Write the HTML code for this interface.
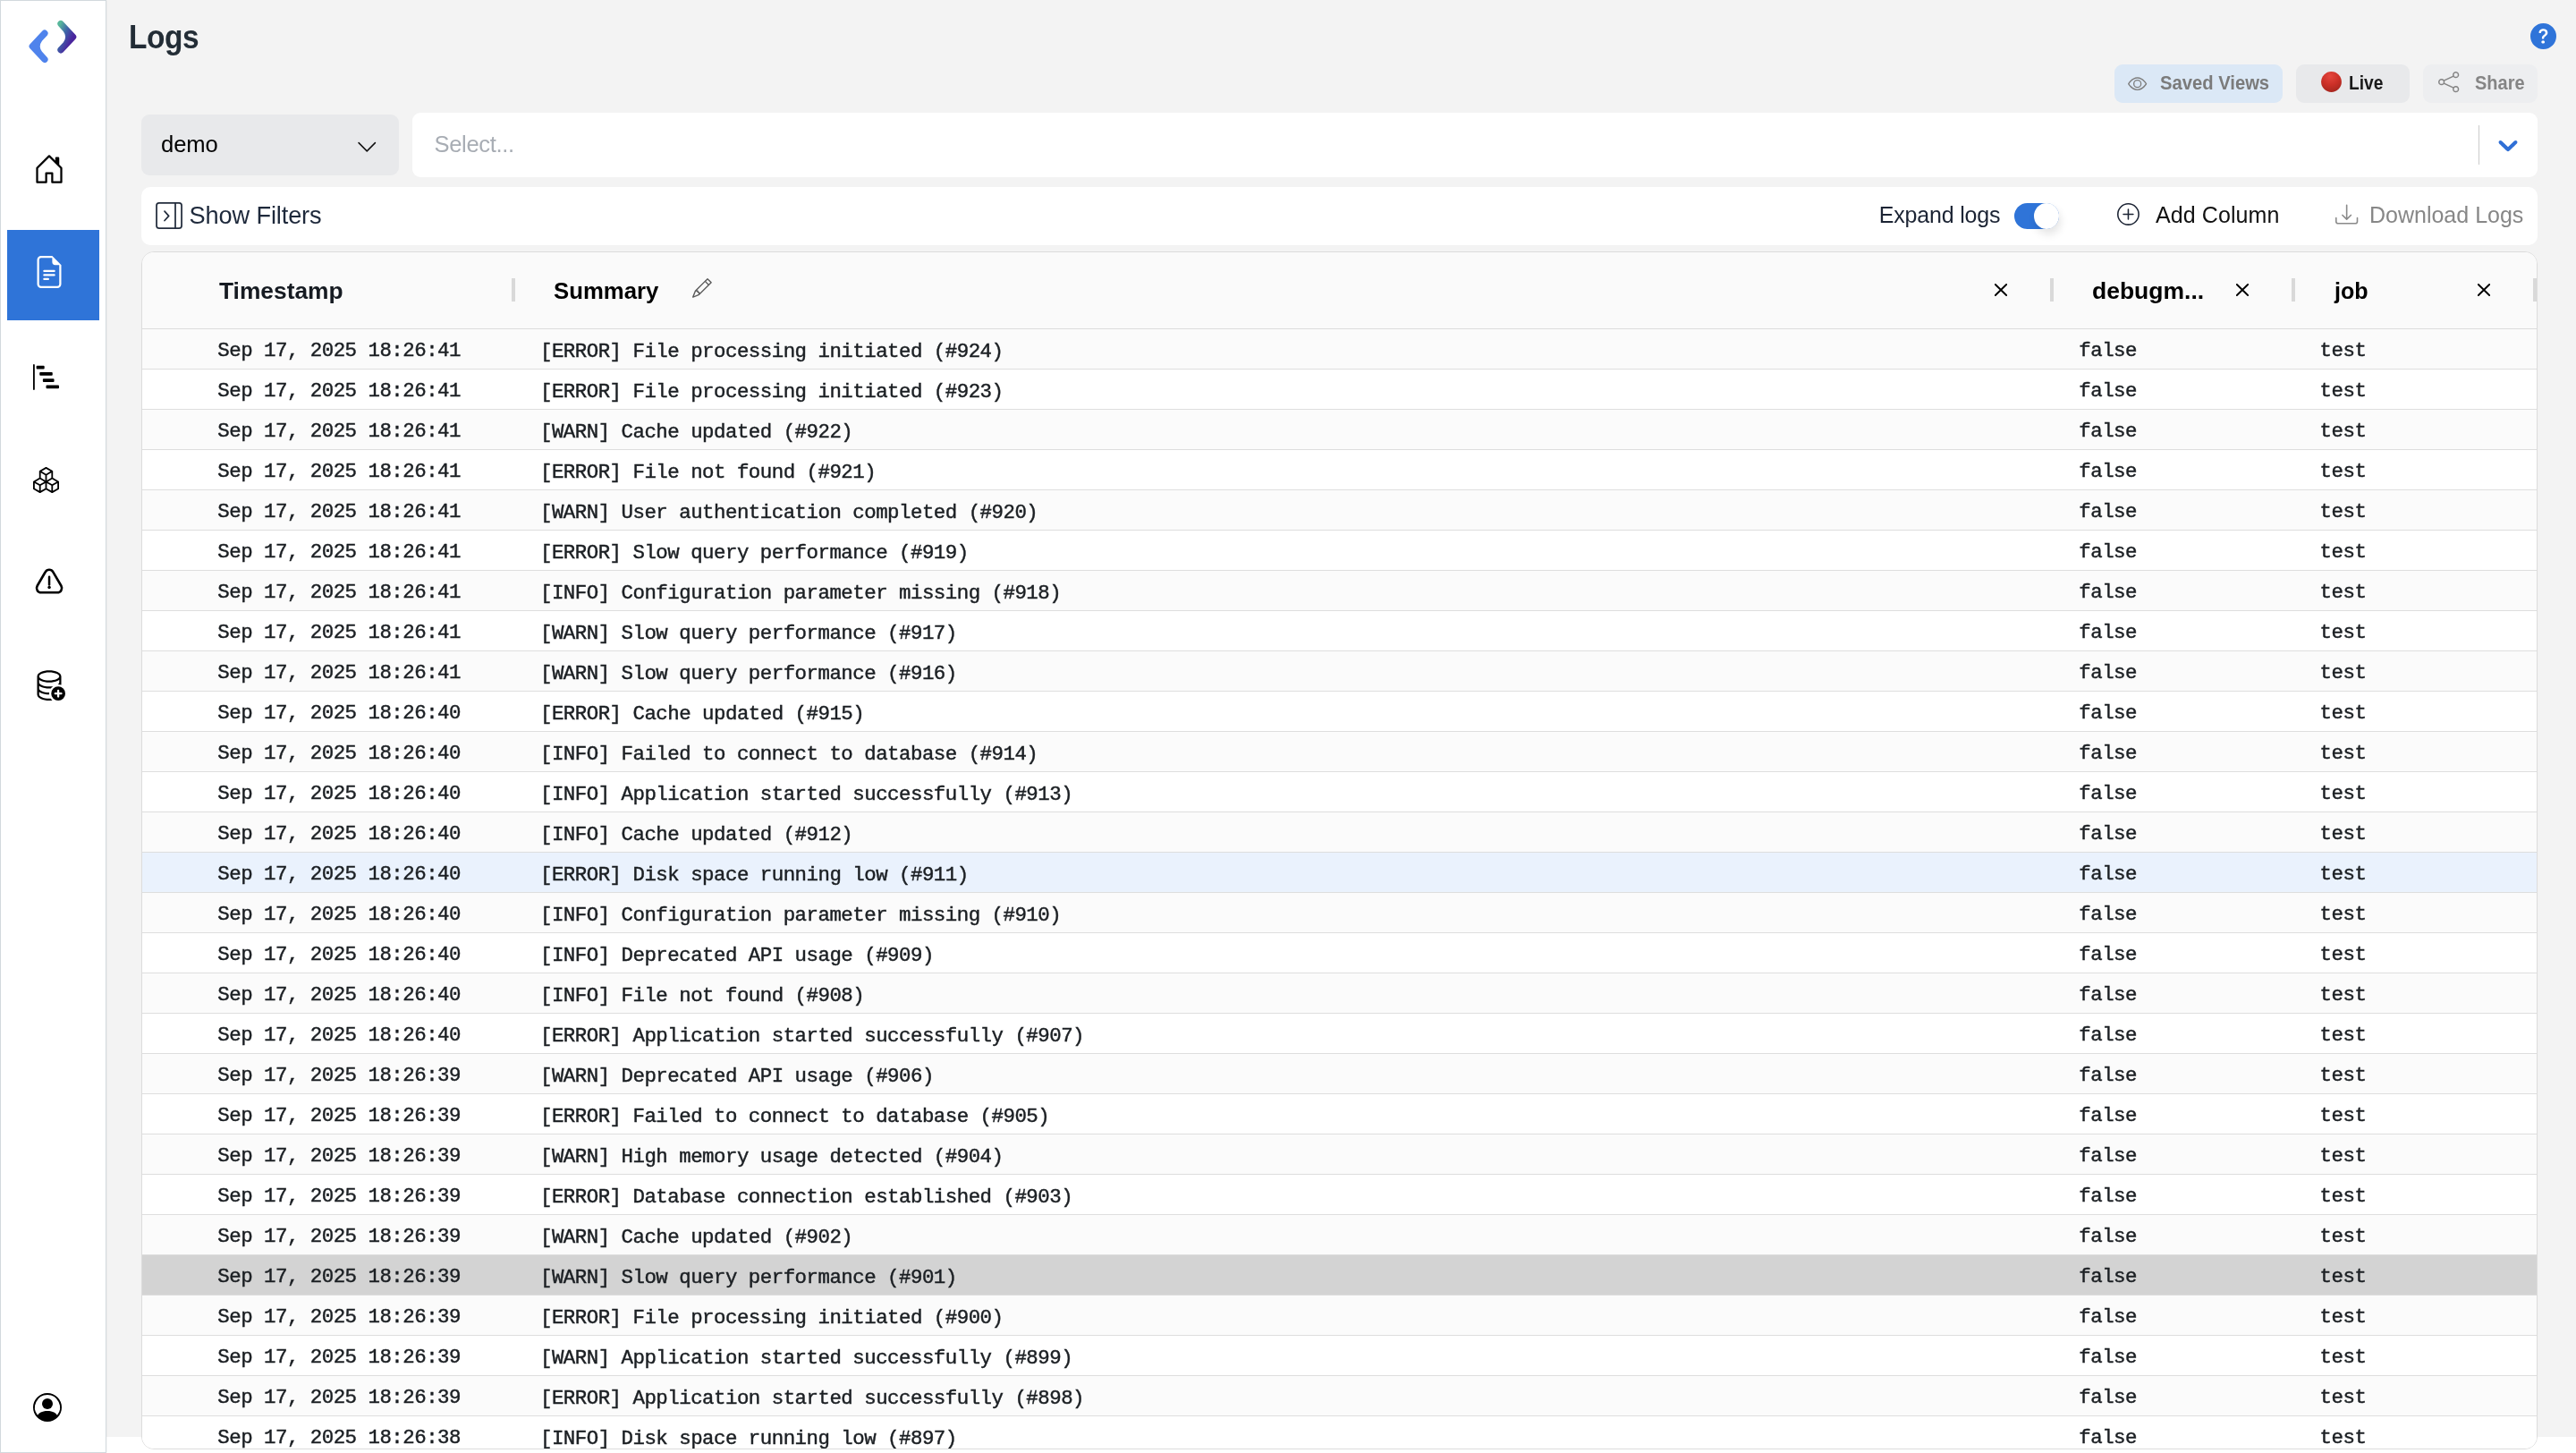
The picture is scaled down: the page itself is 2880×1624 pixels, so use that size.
<!DOCTYPE html>
<html lang="en">
<head>
<meta charset="utf-8">
<title>Logs</title>
<style>
*{box-sizing:border-box;margin:0;padding:0}
html,body{width:2880px;height:1624px;overflow:hidden;background:#fff}
body{will-change:transform;font-family:"Liberation Sans",sans-serif;color:#000;position:relative}
.abs{position:absolute}
svg{position:absolute;display:block;overflow:visible}
#main{position:absolute;left:119px;top:0;width:2761px;height:1606px;background:#f3f3f3}
#side{position:absolute;left:0;top:0;width:119px;height:1624px;background:#fff;border:1px solid #d2d9dd;box-shadow:1px 0 2px rgba(0,0,0,.03)}
#active{position:absolute;left:8px;top:257px;width:103px;height:101px;background:#2f74d8}
.t{position:absolute;white-space:nowrap;line-height:1}
#title{left:144px;top:24px;font-size:36px;font-weight:bold;color:#232d36;letter-spacing:-.5px;transform:scaleX(.93);transform-origin:0 0}
.btn{position:absolute;top:72px;height:43px;border-radius:9px}
.bt{font-weight:bold;font-size:21.5px;transform-origin:0 0}
#demo{position:absolute;left:158px;top:128px;width:288px;height:68px;border-radius:9px;background:#e8e9eb}
#sel{position:absolute;left:461px;top:126px;width:2376px;height:72px;border-radius:9px;background:#fff}
#fbar{position:absolute;left:158px;top:209px;width:2679px;height:65px;border-radius:10px;background:#fff}
#tbl{position:absolute;left:158px;top:281px;width:2679px;height:1339px;border:1px solid #dcdcdc;border-radius:14px;background:#fff;overflow:hidden}
#thead{position:absolute;left:0;top:0;width:100%;height:86px;background:#fafafa;border-bottom:1px solid #dcdcdc}
#thead .t{font-weight:bold;font-size:25.2px;top:30.5px;transform-origin:0 0}
.sep{position:absolute;top:29px;width:4px;height:26px;background:#d9d9d9}
#rows{position:absolute;left:0;top:86px;width:100%}
.r{position:relative;height:45px;border-bottom:1px solid #dedede;background:#fff;font-family:"Liberation Mono",monospace;font-size:22.4px;letter-spacing:-.5px;color:#1b1f23;-webkit-text-stroke:.45px #1b1f23}
.r.o{background:#fbfbfb}
.r.hl{background:#eaf2fd}
.r.sel{background:#d3d3d3}
.r span{position:absolute;top:13px;line-height:22px;white-space:pre}
.c1{left:84.3px}
.c2{left:445px;top:14px!important}
.c3{left:2165.3px}
.c4{left:2434.6px}
</style>
</head>
<body>
<div id="main"></div>

<!-- sidebar -->
<div id="side"></div>
<div id="active"></div>
<!--SIDEICONS-START-->
<!-- logo -->
<svg style="left:0;top:0" width="119" height="100" viewBox="0 0 119 100">
<defs><linearGradient id="lg" gradientUnits="userSpaceOnUse" x1="66" y1="26" x2="86" y2="36"><stop offset="0.05" stop-color="#57b79b"/><stop offset="0.5" stop-color="#3e63a8"/><stop offset="0.9" stop-color="#4a289f"/><stop offset="1" stop-color="#49239c"/></linearGradient></defs>
<path id="lp" fill="#4f83ec" d="M47.4 34.5 L33.6 49.3 Q31.2 51.8 33.6 54.3 L47.4 69.1 A3.7 3.7 0 0 0 52.9 64.2 L47 57.8 Q42.5 51.8 47 45.8 L52.9 39.4 A3.7 3.7 0 0 0 47.4 34.5Z"/>
<path fill="url(#lg)" d="M70.5 23.9 L84.3 38.7 Q86.7 41.2 84.3 43.7 L70.5 58.5 A3.7 3.7 0 0 1 65 53.6 L70.9 47.2 Q75.4 41.2 70.9 35.2 L65 28.8 A3.7 3.7 0 0 1 70.5 23.9Z"/>
</svg>
<!-- house-door -->
<svg style="left:37px;top:171px" width="36" height="36" viewBox="0 0 16 16" fill="#000"><path d="M8.354 1.146a.5.5 0 0 0-.708 0l-6 6A.5.5 0 0 0 1.5 7.5v7a.5.5 0 0 0 .5.5h4.5a.5.5 0 0 0 .5-.5v-4h2v4a.5.5 0 0 0 .5.5H14a.5.5 0 0 0 .5-.5v-7a.5.5 0 0 0-.146-.354L13 5.793V2.5a.5.5 0 0 0-.5-.5h-1a.5.5 0 0 0-.5.5v1.293L8.354 1.146ZM2.5 14V7.707l5.5-5.5 5.5 5.5V14H10v-4a.5.5 0 0 0-.5-.5h-3a.5.5 0 0 0-.5.5v4H2.5Z"/></svg>
<!-- file-earmark-text -->
<svg style="left:37px;top:286px" width="36" height="36" viewBox="0 0 16 16" fill="#fff"><path d="M5.5 7a.5.5 0 0 0 0 1h5a.5.5 0 0 0 0-1h-5zM5 9.5a.5.5 0 0 1 .5-.5h5a.5.5 0 0 1 0 1h-5a.5.5 0 0 1-.5-.5zm0 2a.5.5 0 0 1 .5-.5h2a.5.5 0 0 1 0 1h-2a.5.5 0 0 1-.5-.5z"/><path d="M9.5 0H4a2 2 0 0 0-2 2v12a2 2 0 0 0 2 2h8a2 2 0 0 0 2-2V4.5L9.5 0zm0 1v2A1.5 1.5 0 0 0 11 4.5h2V14a1 1 0 0 1-1 1H4a1 1 0 0 1-1-1V2a1 1 0 0 1 1-1h5.5z"/></svg>
<!-- bar-chart-steps -->
<svg style="left:37px;top:407px" width="29" height="29" viewBox="0 0 16 16" fill="#000"><path d="M.5 0a.5.5 0 0 1 .5.5v15a.5.5 0 0 1-1 0V.5A.5.5 0 0 1 .5 0zM2 1.5a.5.5 0 0 1 .5-.5h4a.5.5 0 0 1 .5.5v1a.5.5 0 0 1-.5.5h-4a.5.5 0 0 1-.5-.5v-1zm2 4a.5.5 0 0 1 .5-.5h7a.5.5 0 0 1 .5.5v1a.5.5 0 0 1-.5.5h-7a.5.5 0 0 1-.5-.5v-1zm2 4a.5.5 0 0 1 .5-.5h6a.5.5 0 0 1 .5.5v1a.5.5 0 0 1-.5.5h-6a.5.5 0 0 1-.5-.5v-1zm2 4a.5.5 0 0 1 .5-.5h7a.5.5 0 0 1 .5.5v1a.5.5 0 0 1-.5.5h-7a.5.5 0 0 1-.5-.5v-1z"/></svg>
<!-- boxes -->
<svg style="left:37px;top:522px" width="29" height="29" viewBox="0 0 16 16" fill="#000"><path d="M7.752.066a.5.5 0 0 1 .496 0l3.75 2.143a.5.5 0 0 1 .252.434v3.995l3.498 2A.5.5 0 0 1 16 9.07v4.286a.5.5 0 0 1-.252.434l-3.75 2.143a.5.5 0 0 1-.496 0l-3.502-2-3.502 2.001a.5.5 0 0 1-.496 0l-3.75-2.143A.5.5 0 0 1 0 13.357V9.071a.5.5 0 0 1 .252-.434L3.75 6.638V2.643a.5.5 0 0 1 .252-.434L7.752.066ZM4.25 7.504 1.508 9.071l2.742 1.567 2.742-1.567L4.25 7.504ZM7.5 9.933l-2.75 1.571v3.134l2.75-1.571V9.933Zm1 3.134 2.75 1.571v-3.134L8.5 9.933v3.134Zm.508-3.996 2.742 1.567 2.742-1.567-2.742-1.567-2.742 1.567Zm2.242-2.433V3.504L8.500 5.076V8.21l2.75-1.572ZM7.5 8.21V5.076L4.75 3.504v3.134L7.5 8.21ZM5.258 2.643 8 4.21l2.742-1.567L8 1.076 5.258 2.643ZM15 9.933l-2.75 1.571v3.134L15 13.067V9.933ZM3.75 14.638v-3.134L1 9.933v3.134l2.75 1.571Z"/></svg>
<!-- alert triangle -->
<svg style="left:37px;top:632px" width="36" height="36" viewBox="0 0 36 36" fill="none" stroke="#000" stroke-width="2.6" stroke-linecap="round" stroke-linejoin="round"><path d="M13.73 7.28 A5.0 5.0 0 0 1 22.37 7.28 L31.42 22.78 A5.0 5.0 0 0 1 27.11 30.30 L8.99 30.30 A5.0 5.0 0 0 1 4.68 22.78 Z"/><path d="M18.05 12.700v8.800" stroke-width="2.500"/><circle cx="18.050" cy="24.600" r="1.750" fill="#000" stroke="none"/></svg>
<!-- database-add -->
<svg style="left:37px;top:747px" width="36" height="36" viewBox="0 0 16 16" fill="#000"><path d="M12.5 16a3.5 3.5 0 1 0 0-7 3.5 3.5 0 0 0 0 7Zm.5-5v1h1a.5.5 0 0 1 0 1h-1v1a.5.5 0 0 1-1 0v-1h-1a.5.5 0 0 1 0-1h1v-1a.5.5 0 0 1 1 0Z"/><path d="M12.096 6.223A4.92 4.92 0 0 0 13 5.698V7c0 .289-.213.654-.753 1.007a4.493 4.493 0 0 1 1.753.25V4c0-1.007-.875-1.755-1.904-2.223C11.022 1.289 9.573 1 8 1s-3.022.289-4.096.777C2.875 2.245 2 2.993 2 4v9c0 1.007.875 1.755 1.904 2.223C4.978 15.710 6.427 16 8 16c.536 0 1.058-.034 1.555-.097a4.525 4.525 0 0 1-.813-.927C8.500 14.992 8.252 15 8 15c-1.464 0-2.766-.27-3.682-.687C3.356 13.875 3 13.373 3 13v-1.302c.271.202.58.378.904.525C4.978 12.710 6.427 13 8 13h.027a4.552 4.552 0 0 1 0-1H8c-1.464 0-2.766-.27-3.682-.687C3.356 10.875 3 10.373 3 10V8.698c.271.202.58.378.904.525C4.978 9.710 6.427 10 8 10c.262 0 .52-.008.774-.024a4.525 4.525 0 0 1 1.102-1.132C9.298 8.944 8.666 9 8 9c-1.464 0-2.766-.27-3.682-.687C3.356 7.875 3 7.373 3 7V5.698c.271.202.58.378.904.525C4.978 6.711 6.427 7 8 7s3.022-.289 4.096-.777ZM3 4c0-.374.356-.875 1.318-1.313C5.234 2.271 6.536 2 8 2s2.766.27 3.682.687C12.644 3.125 13 3.627 13 4c0 .374-.356.875-1.318 1.313C10.766 5.729 9.464 6 8 6s-2.766-.27-3.682-.687C3.356 4.875 3 4.373 3 4Z"/></svg>
<!-- person-circle -->
<svg style="left:37px;top:1557px" width="32" height="32" viewBox="0 0 16 16" fill="#000"><path d="M11 6a3 3 0 1 1-6 0 3 3 0 0 1 6 0z"/><path fill-rule="evenodd" d="M0 8a8 8 0 1 1 16 0A8 8 0 0 1 0 8zm8-7a7 7 0 0 0-5.468 11.370C3.242 11.226 4.805 10 8 10s4.757 1.225 5.468 2.370A7 7 0 0 0 8 1z"/></svg>
<!--SIDEICONS-END-->

<!-- header -->
<div id="title" class="t">Logs</div>
<!--HEADER-START-->
<!-- help -->
<svg style="left:2829.100px;top:26px" width="29" height="29" viewBox="0 0 16 16" fill="#2f74d9"><circle cx="8" cy="8" r="7" fill="#fff"/><path d="M16 8A8 8 0 1 1 0 8a8 8 0 0 1 16 0zM5.496 6.033h.825c.138 0 .248-.113.266-.25.09-.656.54-1.134 1.342-1.134.686 0 1.314.343 1.314 1.168 0 .635-.374.927-.965 1.371-.673.489-1.206 1.06-1.168 1.987l.003.217a.25.25 0 0 0 .25.246h.811a.25.25 0 0 0 .25-.25v-.105c0-.718.273-.927 1.010-1.486.609-.463 1.244-.977 1.244-2.056 0-1.511-1.276-2.241-2.673-2.241-1.267 0-2.655.59-2.750 2.286a.237.237 0 0 0 .241.247zm2.325 6.443c.61 0 1.029-.394 1.029-.927 0-.552-.42-.94-1.029-.94-.584 0-1.009.388-1.009.94 0 .533.425.927 1.010.927z"/></svg>
<!-- buttons -->
<div class="btn" style="left:2364px;width:188px;background:#dbe8f6"></div>
<svg style="left:2379px;top:82.900px" width="21.300" height="21.300" viewBox="0 0 16 16" fill="#7d7d7d"><path d="M16 8s-3-5.500-8-5.500S0 8 0 8s3 5.500 8 5.500S16 8 16 8zM1.173 8a13.133 13.133 0 0 1 1.660-2.043C4.120 4.668 5.880 3.500 8 3.500c2.120 0 3.879 1.168 5.168 2.457A13.133 13.133 0 0 1 14.828 8c-.058.087-.122.183-.195.288-.335.480-.830 1.120-1.465 1.755C11.879 11.332 10.119 12.500 8 12.500c-2.120 0-3.879-1.168-5.168-2.457A13.134 13.134 0 0 1 1.172 8z"/><path d="M8 5.500a2.500 2.500 0 1 0 0 5 2.500 2.500 0 0 0 0-5zM4.500 8a3.500 3.500 0 1 1 7 0 3.500 3.500 0 0 1-7 0z"/></svg>
<div class="t bt" style="left:2415px;top:83px;color:#7b7b7b;transform:scaleX(.94)">Saved Views</div>
<div class="btn" style="left:2567px;width:127px;background:#e8e9eb"></div>
<svg style="left:2595px;top:80px" width="23" height="23" viewBox="0 0 23 23"><defs><radialGradient id="rg" cx="0.45" cy="0.22" r="0.85"><stop offset="0" stop-color="#e4463d"/><stop offset="0.5" stop-color="#cc3028"/><stop offset="1" stop-color="#a1251d"/></radialGradient></defs><circle cx="11.500" cy="11.500" r="11.400" fill="url(#rg)"/></svg>
<div class="t bt" style="left:2626px;top:83px;color:#1a1a1a;transform:scaleX(.895)">Live</div>
<div class="btn" style="left:2709px;width:128px;background:#edeef0"></div>
<svg style="left:2725.700px;top:80px" width="23.300" height="23.300" viewBox="0 0 16 16" fill="#858585"><path d="M13.500 1a1.500 1.500 0 1 0 0 3 1.500 1.500 0 0 0 0-3zM11 2.500a2.500 2.500 0 1 1 .603 1.628l-6.718 3.120a2.499 2.499 0 0 1 0 1.504l6.718 3.120a2.500 2.500 0 1 1-.488.876l-6.718-3.120a2.500 2.500 0 1 1 0-3.256l6.718-3.120A2.500 2.500 0 0 1 11 2.500zm-8.500 4a1.500 1.500 0 1 0 0 3 1.500 1.500 0 0 0 0-3zm11 5.500a1.500 1.500 0 1 0 0 3 1.500 1.500 0 0 0 0-3z"/></svg>
<div class="t bt" style="left:2766.500px;top:83px;color:#858585;transform:scaleX(.929)">Share</div>

<!-- demo select -->
<div id="demo"></div>
<div class="t" style="left:180px;top:149px;font-size:25.600px;color:#000;letter-spacing:-.1px">demo</div>
<svg style="left:398px;top:151.500px" width="24.500" height="24.500" viewBox="0 0 16 16" fill="#111"><path fill-rule="evenodd" d="M1.646 4.646a.5.5 0 0 1 .708 0L8 10.293l5.646-5.647a.5.5 0 0 1 .708.708l-6 6a.5.5 0 0 1-.708 0l-6-6a.5.5 0 0 1 0-.708z"/></svg>
<!-- select -->
<div id="sel"></div>
<div class="t" style="left:485.500px;top:149px;font-size:25.600px;color:#a8adb4;letter-spacing:-.35px">Select...</div>
<div class="abs" style="left:2771px;top:140px;width:1px;height:44px;background:#ccc"></div>
<svg style="left:2786px;top:144.300px" width="36" height="36" viewBox="0 0 20 20" fill="#2f6fd6"><path d="M4.516 7.548c0.436-0.446 1.043-0.481 1.576 0l3.908 3.747 3.908-3.747c0.533-0.481 1.141-0.446 1.574 0 0.436 0.445 0.408 1.197 0 1.615-0.406 0.418-4.695 4.502-4.695 4.502-0.217 0.223-0.502 0.335-0.787 0.335s-0.570-0.112-0.789-0.335c0 0-4.287-4.084-4.695-4.502s-0.436-1.170 0-1.615z"/></svg>

<!-- filter bar -->
<div id="fbar"></div>
<svg style="left:170px;top:222px" width="40" height="40" viewBox="0 0 40 40" fill="none" stroke="#232d3d" stroke-width="1.750" stroke-linecap="round" stroke-linejoin="round"><rect x="5.050" y="4.950" width="28" height="28.200" rx="2.800"/><path d="M26 5v28.100"/><path d="M14 14.200l4.700 5.150-4.700 5.150"/></svg>
<div class="t" style="left:211.500px;top:226.600px;font-size:27.200px;color:#1e293b;letter-spacing:-.13px">Show Filters</div>
<div class="t" style="left:2100.700px;top:228px;font-size:25px;color:#1c2434;letter-spacing:-.17px">Expand logs</div>
<div class="abs" style="left:2252px;top:227px;width:50px;height:29px;border-radius:15px;background:#2f74d8"></div>
<div class="abs" style="left:2273.600px;top:226.500px;width:28.400px;height:29.400px;border-radius:50%;background:#fff;box-shadow:2px 6px 10px rgba(0,0,0,.10)"></div>
<svg style="left:2367px;top:227px" width="24.900" height="24.900" viewBox="0 0 16 16" fill="#1c2434"><path d="M8 15A7 7 0 1 1 8 1a7 7 0 0 1 0 14zm0 1A8 8 0 1 0 8 0a8 8 0 0 0 0 16z"/><path d="M8 4a.5.5 0 0 1 .5.5v3h3a.5.5 0 0 1 0 1h-3v3a.5.5 0 0 1-1 0v-3h-3a.5.5 0 0 1 0-1h3v-3A.5.5 0 0 1 8 4z"/></svg>
<div class="t" style="left:2410px;top:228px;font-size:25px;color:#111;letter-spacing:.09px">Add Column</div>
<svg style="left:2610.700px;top:227px" width="25.300" height="25.300" viewBox="0 0 16 16" fill="#8a8a8a"><path d="M.5 9.900a.5.5 0 0 1 .5.5v2.500a1 1 0 0 0 1 1h12a1 1 0 0 0 1-1v-2.500a.5.5 0 0 1 1 0v2.500a2 2 0 0 1-2 2H2a2 2 0 0 1-2-2v-2.500a.5.5 0 0 1 .5-.5z"/><path d="M7.646 11.854a.5.5 0 0 0 .708 0l3-3a.5.5 0 0 0-.708-.708L8.500 10.293V1.500a.5.5 0 0 0-1 0v8.793L5.354 8.146a.5.5 0 1 0-.708.708l3 3z"/></svg>
<div class="t" style="left:2649px;top:228px;font-size:25px;color:#878787;letter-spacing:0px">Download Logs</div>
<!--HEADER-END-->

<!-- table -->
<div id="tbl">
<div id="thead">
<div class="t" style="left:86px;color:#161b22;transform:scaleX(1.046)">Timestamp</div>
<div class="sep" style="left:413px"></div>
<div class="t" style="left:459.500px;transform:scaleX(1.022)">Summary</div>
<div class="sep" style="left:2133px"></div>
<div class="t" style="left:2180px;transform:scaleX(1.052)">debugm...</div>
<div class="sep" style="left:2403px"></div>
<div class="t" style="left:2450.500px;transform:scaleX(.995)">job</div>
<div class="sep" style="left:2673px"></div>
<svg style="left:614.800px;top:29.250px" width="21.800" height="21.800" viewBox="0 0 16 16" fill="#5a5a5a"><path d="M12.146.146a.5.5 0 0 1 .708 0l3 3a.5.5 0 0 1 0 .708l-10 10a.5.5 0 0 1-.168.110l-5 2a.5.5 0 0 1-.650-.650l2-5a.5.5 0 0 1 .110-.168l10-10zM11.207 2.500 13.500 4.793 14.793 3.500 12.500 1.207 11.207 2.500zm1.586 3L10.500 3.207 4 9.707V10h.5a.5.5 0 0 1 .5.5v.5h.5a.5.5 0 0 1 .5.5v.5h.293l6.500-6.500zm-9.761 5.175-.106.106-1.528 3.821 3.821-1.528.106-.106A.5.5 0 0 1 5 12.500V12h-.5a.5.5 0 0 1-.5-.5V11h-.5a.5.5 0 0 1-.468-.325z"/></svg>
<svg style="left:2068px;top:32.100px" width="20" height="20" viewBox="0 0 20 20" fill="none" stroke="#000" stroke-width="1.900" stroke-linecap="round"><path d="M3.850 3.950L16.150 16.050M16.150 3.950L3.850 16.050"/></svg>
<svg style="left:2338px;top:32.100px" width="20" height="20" viewBox="0 0 20 20" fill="none" stroke="#000" stroke-width="1.900" stroke-linecap="round"><path d="M3.850 3.950L16.150 16.050M16.150 3.950L3.850 16.050"/></svg>
<svg style="left:2608px;top:32.100px" width="20" height="20" viewBox="0 0 20 20" fill="none" stroke="#000" stroke-width="1.900" stroke-linecap="round"><path d="M3.850 3.950L16.150 16.050M16.150 3.950L3.850 16.050"/></svg>

</div>
<div id="rows">
<div class="r o"><span class="c1">Sep 17, 2025 18:26:41</span><span class="c2">[ERROR] File processing initiated (#924)</span><span class="c3">false</span><span class="c4">test</span></div>
<div class="r"><span class="c1">Sep 17, 2025 18:26:41</span><span class="c2">[ERROR] File processing initiated (#923)</span><span class="c3">false</span><span class="c4">test</span></div>
<div class="r o"><span class="c1">Sep 17, 2025 18:26:41</span><span class="c2">[WARN] Cache updated (#922)</span><span class="c3">false</span><span class="c4">test</span></div>
<div class="r"><span class="c1">Sep 17, 2025 18:26:41</span><span class="c2">[ERROR] File not found (#921)</span><span class="c3">false</span><span class="c4">test</span></div>
<div class="r o"><span class="c1">Sep 17, 2025 18:26:41</span><span class="c2">[WARN] User authentication completed (#920)</span><span class="c3">false</span><span class="c4">test</span></div>
<div class="r"><span class="c1">Sep 17, 2025 18:26:41</span><span class="c2">[ERROR] Slow query performance (#919)</span><span class="c3">false</span><span class="c4">test</span></div>
<div class="r o"><span class="c1">Sep 17, 2025 18:26:41</span><span class="c2">[INFO] Configuration parameter missing (#918)</span><span class="c3">false</span><span class="c4">test</span></div>
<div class="r"><span class="c1">Sep 17, 2025 18:26:41</span><span class="c2">[WARN] Slow query performance (#917)</span><span class="c3">false</span><span class="c4">test</span></div>
<div class="r o"><span class="c1">Sep 17, 2025 18:26:41</span><span class="c2">[WARN] Slow query performance (#916)</span><span class="c3">false</span><span class="c4">test</span></div>
<div class="r"><span class="c1">Sep 17, 2025 18:26:40</span><span class="c2">[ERROR] Cache updated (#915)</span><span class="c3">false</span><span class="c4">test</span></div>
<div class="r o"><span class="c1">Sep 17, 2025 18:26:40</span><span class="c2">[INFO] Failed to connect to database (#914)</span><span class="c3">false</span><span class="c4">test</span></div>
<div class="r"><span class="c1">Sep 17, 2025 18:26:40</span><span class="c2">[INFO] Application started successfully (#913)</span><span class="c3">false</span><span class="c4">test</span></div>
<div class="r o"><span class="c1">Sep 17, 2025 18:26:40</span><span class="c2">[INFO] Cache updated (#912)</span><span class="c3">false</span><span class="c4">test</span></div>
<div class="r hl"><span class="c1">Sep 17, 2025 18:26:40</span><span class="c2">[ERROR] Disk space running low (#911)</span><span class="c3">false</span><span class="c4">test</span></div>
<div class="r o"><span class="c1">Sep 17, 2025 18:26:40</span><span class="c2">[INFO] Configuration parameter missing (#910)</span><span class="c3">false</span><span class="c4">test</span></div>
<div class="r"><span class="c1">Sep 17, 2025 18:26:40</span><span class="c2">[INFO] Deprecated API usage (#909)</span><span class="c3">false</span><span class="c4">test</span></div>
<div class="r o"><span class="c1">Sep 17, 2025 18:26:40</span><span class="c2">[INFO] File not found (#908)</span><span class="c3">false</span><span class="c4">test</span></div>
<div class="r"><span class="c1">Sep 17, 2025 18:26:40</span><span class="c2">[ERROR] Application started successfully (#907)</span><span class="c3">false</span><span class="c4">test</span></div>
<div class="r o"><span class="c1">Sep 17, 2025 18:26:39</span><span class="c2">[WARN] Deprecated API usage (#906)</span><span class="c3">false</span><span class="c4">test</span></div>
<div class="r"><span class="c1">Sep 17, 2025 18:26:39</span><span class="c2">[ERROR] Failed to connect to database (#905)</span><span class="c3">false</span><span class="c4">test</span></div>
<div class="r o"><span class="c1">Sep 17, 2025 18:26:39</span><span class="c2">[WARN] High memory usage detected (#904)</span><span class="c3">false</span><span class="c4">test</span></div>
<div class="r"><span class="c1">Sep 17, 2025 18:26:39</span><span class="c2">[ERROR] Database connection established (#903)</span><span class="c3">false</span><span class="c4">test</span></div>
<div class="r o"><span class="c1">Sep 17, 2025 18:26:39</span><span class="c2">[WARN] Cache updated (#902)</span><span class="c3">false</span><span class="c4">test</span></div>
<div class="r sel"><span class="c1">Sep 17, 2025 18:26:39</span><span class="c2">[WARN] Slow query performance (#901)</span><span class="c3">false</span><span class="c4">test</span></div>
<div class="r o"><span class="c1">Sep 17, 2025 18:26:39</span><span class="c2">[ERROR] File processing initiated (#900)</span><span class="c3">false</span><span class="c4">test</span></div>
<div class="r"><span class="c1">Sep 17, 2025 18:26:39</span><span class="c2">[WARN] Application started successfully (#899)</span><span class="c3">false</span><span class="c4">test</span></div>
<div class="r o"><span class="c1">Sep 17, 2025 18:26:39</span><span class="c2">[ERROR] Application started successfully (#898)</span><span class="c3">false</span><span class="c4">test</span></div>
<div class="r"><span class="c1">Sep 17, 2025 18:26:38</span><span class="c2">[INFO] Disk space running low (#897)</span><span class="c3">false</span><span class="c4">test</span></div>
</div>
</div>
<script>(function(){var w=window.innerWidth;if(w&&Math.abs(w-2880)>2){document.documentElement.style.zoom=w/2880;}})();</script>
</body>
</html>
